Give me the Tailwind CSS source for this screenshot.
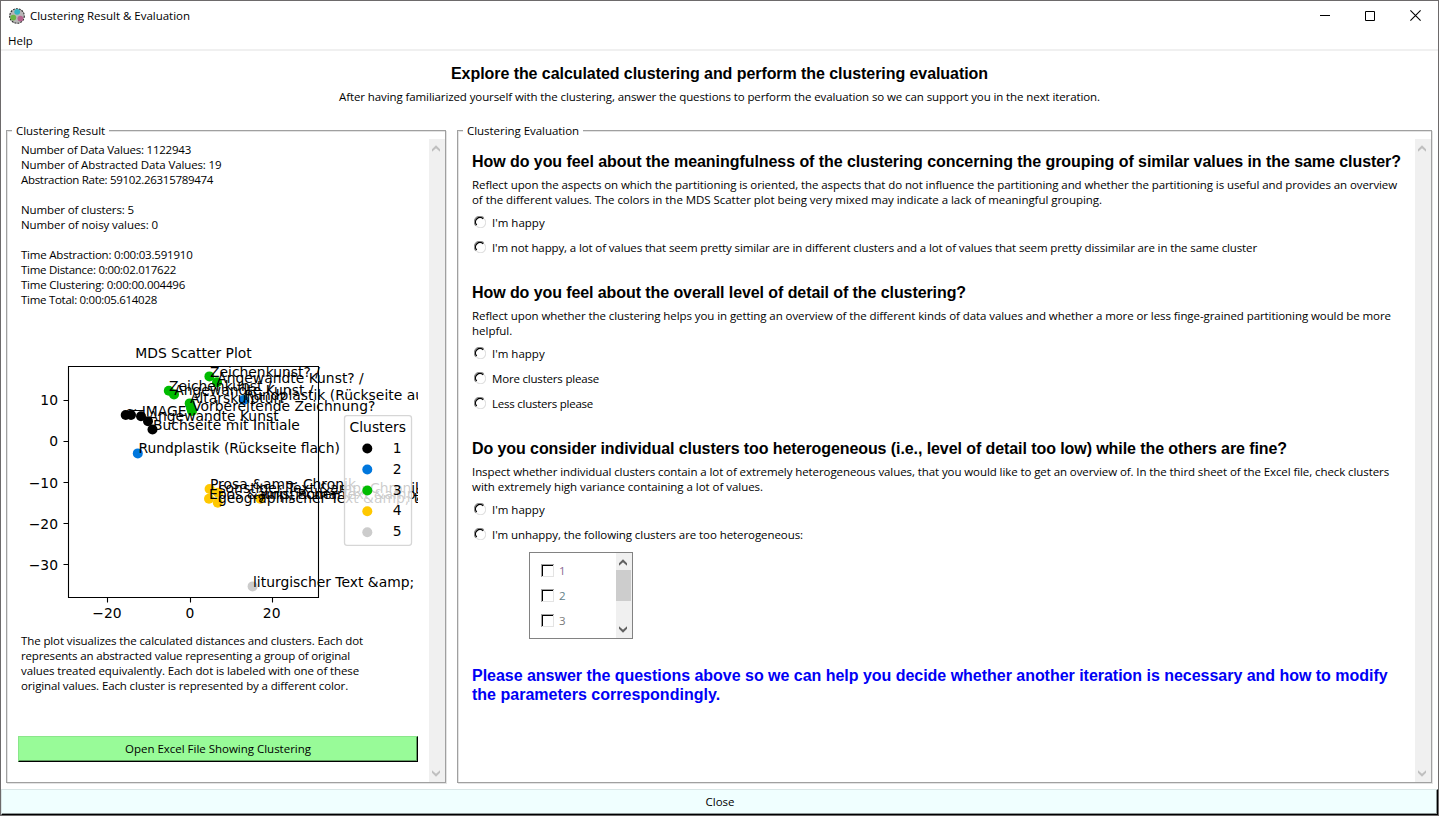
<!DOCTYPE html>
<html lang="en">
<head>
<meta charset="utf-8">
<title>Clustering Result &amp; Evaluation</title>
<script src="https://cdn.jsdelivr.net/npm/@tailwindcss/browser@4"></script>
</head>
<body class="h-[816px] w-[1439px] overflow-hidden bg-white font-['Open_Sans','Noto_Sans',sans-serif] text-[11.5px] leading-[15px] text-black">
<svg class="hidden">
  <defs>
    <g id="radio" fill="none">
      <path d="M1.9 9.8A5.3 5.3 0 0 1 9.8 1.9" stroke="#8a8a8a" stroke-width="1.1"/>
      <path d="M2.7 9A4.4 4.4 0 0 1 9.3 2.9" stroke="#000" stroke-width="1.3"/>
      <path d="M10.2 2.8A5.3 5.3 0 0 1 2.6 10.2" stroke="#e0e0e0" stroke-width="1.1"/>
    </g>
    <g id="check">
      <path d="M0 0H13V1H1V13H0Z" fill="#a0a0a0"/>
      <path d="M1 1H12V2H2V12H1Z" fill="#000"/>
      <path d="M12 1H13V13H1V12H12Z" fill="#e3e3e3"/>
    </g>
    <path id="up" d="M0 4.2L4 .2L8 4.2V6.8L4 3.2L0 6.8Z"/>
    <path id="down" d="M0 .2V2.8L4 6.8L8 2.8V.2L4 3.8Z"/>
  </defs>
</svg>
<div class="flex h-full flex-col border border-[#6d6a6b]">
  <header class="flex h-[29px] shrink-0 items-center pl-2">
    <svg class="size-4" viewBox="0 0 16 16">
      <circle cx="8" cy="8" r="7.3" fill="#b9b6b7" stroke="#2b2b2b" stroke-width="1.1" stroke-dasharray="2 1"/>
      <circle cx="8.2" cy="3.8" r="2.9" fill="#35b5c4"/>
      <circle cx="4.3" cy="9.6" r="2.9" fill="#6cb544"/>
      <circle cx="11.4" cy="10.6" r="2.9" fill="#b5648f"/>
    </svg>
    <h1 class="ml-[5px] flex-1 tracking-[-0.014px]">Clustering Result &amp; Evaluation</h1>
    <div class="flex gap-[35px] pr-[17px]">
      <svg class="h-[11px] w-[10px]" viewBox="0 0 10 11"><path d="M0 5.5H10" stroke="#000"/></svg>
      <svg class="h-[11px] w-[10px]" viewBox="0 0 10 11"><path d="M.5 1.5H9.5V10.5H.5Z" fill="none" stroke="#000"/></svg>
      <svg class="h-[11px] w-[11px]" viewBox="0 0 11 11"><path d="M.4 .4L10.6 10.6M10.6 .4L.4 10.6" stroke="#000" stroke-width="1.1"/></svg>
    </div>
  </header>
  <nav class="flex h-[21px] shrink-0 items-center border-b-2 border-[#f0f0f0] pt-[2px] pl-[7px]">Help</nav>

  <div class="flex h-[78px] shrink-0 flex-col items-center pt-[13px]">
    <h2 class="font-['Liberation_Sans',Arial,sans-serif] text-[16px] leading-[20px] font-bold tracking-[-0.063px]">Explore the calculated clustering and perform the clustering evaluation</h2>
    <p class="mt-[5px] tracking-[-0.099px]">After having familiarized yourself with the clustering, answer the questions to perform the evaluation so we can support you in the next iteration.</p>
  </div>

  <main class="flex h-[660px] shrink-0 gap-[11px] pt-[1px] pr-[6px] pl-[5px]">
    <section class="relative flex h-[653px] w-[440px] border border-[#a0a0a0] pt-2 shadow-[1px_1px_0_#e3e3e3,inset_1px_1px_0_#e3e3e3]">
      <h3 class="absolute -top-[8px] left-[5px] bg-white px-1 tracking-[-0.071px]">Clustering Result</h3>
      <div class="w-[422px] pl-[11px]">
        <div class="mt-[3px] ml-[3px] flex flex-col whitespace-nowrap">
          <p class="tracking-[-0.223px]">Number of Data Values: 1122943</p>
          <p class="tracking-[-0.122px]">Number of Abstracted Data Values: 19</p>
          <p class="tracking-[-0.306px]">Abstraction Rate: 59102.26315789474</p>
          <p class="mt-[15px] tracking-[-0.123px]">Number of clusters: 5</p>
          <p class="tracking-[-0.081px]">Number of noisy values: 0</p>
          <p class="mt-[15px] tracking-[-0.209px]">Time Abstraction: 0:00:03.591910</p>
          <p class="tracking-[-0.275px]">Time Distance: 0:00:02.017622</p>
          <p class="tracking-[-0.221px]">Time Clustering: 0:00:00.004496</p>
          <p class="tracking-[-0.284px]">Time Total: 0:00:05.614028</p>
        </div>
        <svg class="mt-[11px] block h-[312px] w-[400px] font-['DejaVu_Sans',sans-serif] text-[13.89px]" viewBox="18 318 400 312">
          <text x="193.5" y="358" text-anchor="middle">MDS Scatter Plot</text>
          <g fill="#000"><circle cx="125.7" cy="415" r="5"/><circle cx="131" cy="415" r="5"/><circle cx="141" cy="416.3" r="5"/><circle cx="148" cy="421.3" r="5"/><circle cx="152.5" cy="429.5" r="5"/></g>
          <g fill="#0077dd"><circle cx="137.8" cy="453.4" r="5"/><circle cx="243.8" cy="400" r="5"/></g>
          <g fill="#00bb00"><circle cx="168.8" cy="390.8" r="5"/><circle cx="174" cy="394.4" r="5"/><circle cx="209.4" cy="376.4" r="5"/><circle cx="217" cy="382.3" r="5"/><circle cx="189.7" cy="403.4" r="5"/><circle cx="191" cy="408" r="5"/><circle cx="192" cy="411" r="5"/></g>
          <g fill="#ffc800"><circle cx="209.6" cy="489" r="5"/><circle cx="218" cy="492.8" r="5"/><circle cx="209" cy="498.7" r="5"/><circle cx="217.8" cy="502.8" r="5"/><circle cx="260.3" cy="498.8" r="5"/></g>
          <circle cx="252.6" cy="586.4" r="5" fill="#ccc"/>
          <path d="M68.5 366.5H318.5V597.5H68.5ZM107.5 597.5v5M190.5 597.5v5M272.5 597.5v5M68.5 400.5h-5M68.5 441.5h-5M68.5 482.5h-5M68.5 523.5h-5M68.5 564.5h-5" fill="none" stroke="#000" stroke-width="1.1"/>
          <g text-anchor="end"><text x="58" y="405.3">10</text><text x="58" y="446.3">0</text><text x="58" y="487.6">−10</text><text x="58" y="528.7">−20</text><text x="58" y="569.7">−30</text></g>
          <g text-anchor="middle"><text x="107" y="618">−20</text><text x="190" y="618">0</text><text x="271.7" y="618">20</text></g>
          <text x="125.7" y="415">~</text>
          <text x="131" y="415">—</text>
          <text x="141.7" y="416.3">IMAGE</text>
          <text x="148.5" y="421">Angewandte Kunst</text>
          <text x="153" y="430">Buchseite mit Initiale</text>
          <text x="138.4" y="453.2">Rundplastik (Rückseite flach)</text>
          <text x="244.2" y="400">Rundplastik (Rückseite ausgearbeitet)</text>
          <text x="169" y="390.8">Zeichenkunst /</text>
          <text x="174.2" y="395">Angewandte Kunst /</text>
          <text x="210" y="377">Zeichenkunst? /</text>
          <text x="217.2" y="383">Angewandte Kunst? /</text>
          <text x="190" y="403">Altarskulptur?</text>
          <text x="192.2" y="411">Vorbereitende Zeichnung?</text>
          <text x="210" y="489">Prosa &amp;amp; Chronik</text>
          <text x="218.4" y="493">sonstiger Text &amp;amp; Chronik</text>
          <text x="209" y="499">Epos &amp;amp; Roman</text>
          <text x="218" y="503">geographischer Text &amp;amp; t</text>
          <text x="260.3" y="499">juristischer Text &amp;amp; p</text>
          <text x="253" y="586.6">liturgischer Text &amp;amp;</text>
          <rect x="344.5" y="415.7" width="67" height="129.6" rx="2.5" fill="#fff" fill-opacity=".8" stroke="#ccc" stroke-opacity=".8" stroke-width="1.3"/>
          <text x="377.8" y="432" text-anchor="middle">Clusters</text>
          <circle cx="367.3" cy="448.5" r="5"/><circle cx="367.3" cy="469.5" r="5" fill="#0077dd"/><circle cx="367.3" cy="490.5" r="5" fill="#00bb00"/><circle cx="367.3" cy="511.3" r="5" fill="#ffc800"/><circle cx="367.3" cy="532.3" r="5" fill="#ccc"/>
          <text x="392.8" y="453">1</text><text x="392.8" y="474">2</text><text x="392.8" y="495">3</text><text x="392.8" y="515.4">4</text><text x="392.8" y="536.4">5</text>
        </svg>
        <div class="mt-[3px] ml-[3px] whitespace-nowrap">
          <p class="tracking-[-0.108px]">The plot visualizes the calculated distances and clusters. Each dot</p>
          <p class="tracking-[-0.155px]">represents an abstracted value representing a group of original</p>
          <p class="tracking-[-0.115px]">values treated equivalently. Each dot is labeled with one of these</p>
          <p class="tracking-[-0.127px]">original values. Each cluster is represented by a different color.</p>
        </div>
        <button class="mt-[43px] flex h-[26px] w-[400px] items-center justify-center border-t border-r border-b border-l border-t-[#8ae68a] border-r-black border-b-black border-l-[#8ae68a] bg-[#98fb98] pb-[2px] tracking-[-0.013px] shadow-[inset_-1px_-1px_0_#5f9e5f]">Open Excel File Showing Clustering</button>
      </div>
      <div class="flex w-4 flex-col justify-between bg-[#f0f0f0] pt-[6px] pb-[5px] pl-[3px]">
        <svg class="h-[7px] w-2 fill-[#bfbfbf]" viewBox="0 0 8 7"><use href="#up"/></svg>
        <svg class="h-[7px] w-2 fill-[#bfbfbf]" viewBox="0 0 8 7"><use href="#down"/></svg>
      </div>
    </section>

    <section class="relative flex h-[653px] w-[975px] border border-[#a0a0a0] pt-2 shadow-[1px_1px_0_#e3e3e3,inset_1px_1px_0_#e3e3e3]">
      <h3 class="absolute -top-[8px] left-[5px] bg-white px-1 tracking-[-0.04px]">Clustering Evaluation</h3>
      <div class="w-[957px] pt-[13px] pl-[14px] whitespace-nowrap">
        <h4 class="font-['Liberation_Sans',Arial,sans-serif] text-[16px] leading-[19px] font-bold tracking-[-0.059px]">How do you feel about the meaningfulness of the clustering concerning the grouping of similar values in the same cluster?</h4>
        <p class="mt-[6px] tracking-[-0.088px]">Reflect upon the aspects on which the partitioning is oriented, the aspects that do not influence the partitioning and whether the partitioning is useful and provides an overview</p>
        <p class="tracking-[-0.044px]">of the different values. The colors in the MDS Scatter plot being very mixed may indicate a lack of meaningful grouping.</p>
        <label class="mt-[3px] flex h-[25px] items-center gap-[6px] pl-[2px]"><svg class="mb-[2px] size-3"><use href="#radio"/></svg><span>I'm happy</span></label>
        <label class="flex h-[25px] items-center gap-[6px] pl-[2px]"><svg class="mb-[2px] size-3"><use href="#radio"/></svg><span class="tracking-[-0.124px]">I'm not happy, a lot of values that seem pretty similar are in different clusters and a lot of values that seem pretty dissimilar are in the same cluster</span></label>

        <h4 class="mt-[23px] font-['Liberation_Sans',Arial,sans-serif] text-[16px] leading-[19px] font-bold tracking-[-0.082px]">How do you feel about the overall level of detail of the clustering?</h4>
        <p class="mt-[6px] tracking-[-0.078px]">Reflect upon whether the clustering helps you in getting an overview of the different kinds of data values and whether a more or less finge-grained partitioning would be more</p>
        <p>helpful.</p>
        <label class="mt-[3px] flex h-[25px] items-center gap-[6px] pl-[2px]"><svg class="mb-[2px] size-3"><use href="#radio"/></svg><span>I'm happy</span></label>
        <label class="flex h-[25px] items-center gap-[6px] pl-[2px]"><svg class="mb-[2px] size-3"><use href="#radio"/></svg><span class="tracking-[-0.19px]">More clusters please</span></label>
        <label class="flex h-[25px] items-center gap-[6px] pl-[2px]"><svg class="mb-[2px] size-3"><use href="#radio"/></svg><span class="tracking-[-0.24px]">Less clusters please</span></label>

        <h4 class="mt-[23px] font-['Liberation_Sans',Arial,sans-serif] text-[16px] leading-[19px] font-bold tracking-[-0.081px]">Do you consider individual clusters too heterogeneous (i.e., level of detail too low) while the others are fine?</h4>
        <p class="mt-[6px] tracking-[-0.085px]">Inspect whether individual clusters contain a lot of extremely heterogeneous values, that you would like to get an overview of. In the third sheet of the Excel file, check clusters</p>
        <p class="tracking-[-0.036px]">with extremely high variance containing a lot of values.</p>
        <label class="mt-[3px] flex h-[25px] items-center gap-[6px] pl-[2px]"><svg class="mb-[2px] size-3"><use href="#radio"/></svg><span>I'm happy</span></label>
        <label class="flex h-[25px] items-center gap-[6px] pl-[2px]"><svg class="mb-[2px] size-3"><use href="#radio"/></svg><span class="tracking-[-0.076px]">I'm unhappy, the following clusters are too heterogeneous:</span></label>

        <div class="mt-[5px] ml-[57px] flex h-[87px] w-[104px] border border-[#828282] text-[#7a7a7a]">
          <div class="flex-1 pt-[5px] pl-[11px]">
            <label class="flex h-[25px] items-center gap-[5px]"><svg class="size-[13px]"><use href="#check"/></svg><span class="text-[#8a6a96]">1</span></label>
            <label class="flex h-[25px] items-center gap-[5px]"><svg class="size-[13px]"><use href="#check"/></svg><span class="text-[#5f8088]">2</span></label>
            <label class="flex h-[25px] items-center gap-[5px]"><svg class="size-[13px]"><use href="#check"/></svg><span>3</span></label>
          </div>
          <div class="flex w-4 flex-col bg-[#f0f0f0]">
            <svg class="mt-[6px] ml-[3px] h-[7px] w-2 fill-[#606060]" viewBox="0 0 8 7"><use href="#up"/></svg>
            <div class="mt-[4px] h-[31px] w-[15px] bg-[#cdcdcd]"></div>
            <svg class="mt-[25px] ml-[3px] h-[7px] w-2 fill-[#606060]" viewBox="0 0 8 7"><use href="#down"/></svg>
          </div>
        </div>

        <p class="mt-[27px] font-['Liberation_Sans',Arial,sans-serif] text-[16px] leading-[19px] font-bold tracking-[-0.025px] text-[#0000f5]">Please answer the questions above so we can help you decide whether another iteration is necessary and how to modify<br><span class="tracking-[0.01px]">the parameters correspondingly.</span></p>
      </div>
      <div class="flex w-4 flex-col justify-between bg-[#f0f0f0] pt-[6px] pb-[5px] pl-[3px]">
        <svg class="h-[7px] w-2 fill-[#bfbfbf]" viewBox="0 0 8 7"><use href="#up"/></svg>
        <svg class="h-[7px] w-2 fill-[#bfbfbf]" viewBox="0 0 8 7"><use href="#down"/></svg>
      </div>
    </section>
  </main>
  <button class="flex h-[26px] w-full shrink-0 items-center justify-center border border-t-[#d9e6e6] border-r-black border-b-black border-l-[#d9e6e6] bg-[#f0ffff] pb-[2px] pl-px shadow-[inset_-1px_-1px_0_#8f9898]">Close</button>
</div>
</body>
</html>
